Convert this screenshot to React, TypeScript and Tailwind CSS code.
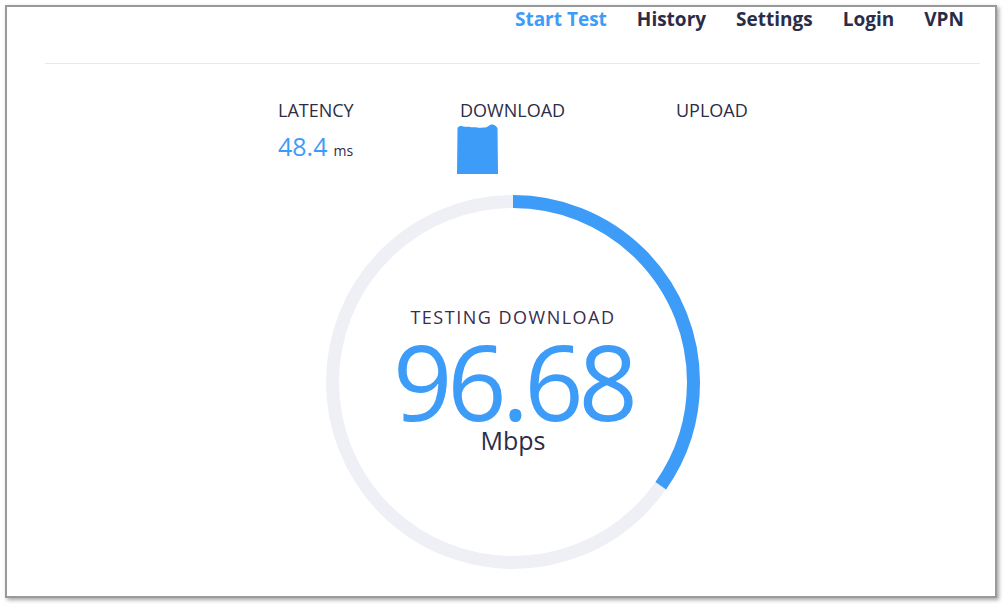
import React from "react";

const NAV = ["Start Test", "History", "Settings", "Login", "VPN"];

function Gauge() {
  // ring: outer radius 187, stroke 13, progress ~125deg
  const r = 180.5;
  const c = 2 * Math.PI * r;
  const progress = 125 / 360;
  return (
    <svg width="376" height="376" viewBox="0 0 376 376" className="block">
      <circle cx="188" cy="188" r={r} fill="none" stroke="#eff0f6" strokeWidth="13" />
      <circle
        cx="188"
        cy="188"
        r={r}
        fill="none"
        stroke="#3d9cf8"
        strokeWidth="13"
        strokeDasharray={`${c * progress} ${c}`}
        transform="rotate(-90 188 188)"
      />
    </svg>
  );
}

function DownloadBar() {
  return (
    <svg width="42" height="50" viewBox="0 0 42 50" className="block">
      <path
        d="M0 50 L0.5 4 C2 2 4 1.5 6 2.5 C9 3.5 11 2 13 3 C16 4 18 2.5 20 3.5 C23 4.5 25 3 27 3.5 C30 4 32 1 34 0.5 C37 0 39 2 40.5 4 L41 50 Z"
        fill="#3d9cf8"
      />
    </svg>
  );
}

export default function App() {
  return (
    <div className="w-[1005px] h-[604px] bg-white pt-[5px] pl-[5px] font-['Open_Sans',sans-serif]">
      <div className="w-[992px] h-[593px] border-2 border-[#9a9a9a] bg-white shadow-[2px_2px_4px_rgba(0,0,0,0.35)] overflow-hidden">
        <nav className="h-[56px] flex justify-end items-start gap-[30px] pr-[31px] pt-0">
          {NAV.map((item, i) => (
            <span
              key={item}
              className={`text-[19px] font-bold leading-[25px] ${i === 0 ? "text-[#3d9cf8]" : "text-[#2b2d48]"}`}
            >
              {item}
            </span>
          ))}
        </nav>
        <div className="ml-[38px] w-[935px] h-px bg-[#e8e9ec]" />

        <div className="flex pl-[271px] pt-[35px] h-[130px]">
          <div className="w-[182px]">
            <div className="text-[18px] leading-[22px] text-[#2b2d48]">LATENCY</div>
            <div className="mt-[11px] flex items-baseline gap-[6px]">
              <span className="text-[25px] leading-[28px] text-[#3d9cf8]">48.4</span>
              <span className="text-[14px] text-[#2b2d48]">ms</span>
            </div>
          </div>
          <div className="w-[216px]">
            <div className="text-[18px] leading-[22px] text-[#2b2d48]">DOWNLOAD</div>
            <div className="mt-[3px] -ml-[3px]">
              <DownloadBar />
            </div>
          </div>
          <div>
            <div className="text-[18px] leading-[22px] text-[#2b2d48]">UPLOAD</div>
          </div>
        </div>

        <div className="ml-[318px] relative w-[376px] h-[376px]">
          <Gauge />
          <div className="absolute inset-0 flex flex-col items-center pt-[111px]">
            <div className="text-[18px] leading-[24px] tracking-[1.5px] text-[#3a2c4c]">TESTING DOWNLOAD</div>
            <div className="mt-[12px] text-[104px] leading-[80px] tracking-[-5px] text-[#3d9cf8]">96.68</div>
            <div className="mt-[4px] text-[25px] leading-[30px] text-[#2b2d48]">Mbps</div>
          </div>
        </div>
      </div>
    </div>
  );
}
